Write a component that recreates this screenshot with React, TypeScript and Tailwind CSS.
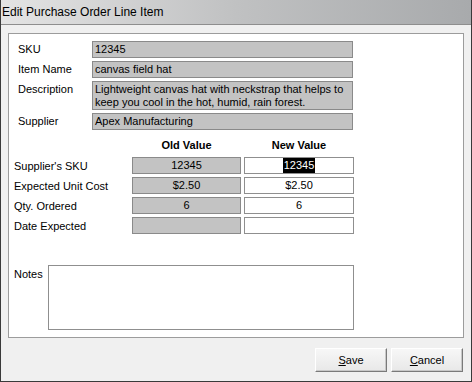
import React from "react";

const font = { fontFamily: '"Liberation Sans", Arial, sans-serif' };

function ReadField({ children, tall }: { children?: React.ReactNode; tall?: boolean }) {
  return (
    <div
      className={`w-[261px] border border-[#8a8a8a] bg-[#c3c3c3] px-[2px] text-[11px] text-black ${
        tall ? "h-[29px] leading-[13px] pt-[1px]" : "h-[17px] leading-[15px]"
      }`}
    >
      {children}
    </div>
  );
}

function InfoRow({ label, children, tall }: { label: string; children?: React.ReactNode; tall?: boolean }) {
  return (
    <div className="flex items-start">
      <div className="w-[74px] text-[11px] leading-[16px] text-black">{label}</div>
      <ReadField tall={tall}>{children}</ReadField>
    </div>
  );
}

function ValueRow({ label, oldVal, newVal, selected }: { label: string; oldVal: string; newVal: string; selected?: boolean }) {
  return (
    <div className="flex items-center">
      <div className="w-[118px] text-[11px] leading-[16px] text-black">{label}</div>
      <div className="flex h-[17px] w-[109px] items-center justify-center border border-[#8a8a8a] bg-[#c3c3c3] text-[11px] leading-[15px] text-black">
        {oldVal}
      </div>
      <div className="ml-[3px] flex h-[17px] w-[110px] items-center justify-center border border-[#8f8f8f] bg-white text-[11px] leading-[15px] text-black">
        {selected ? <span className="bg-black px-[1px] text-white">{newVal}</span> : newVal}
      </div>
    </div>
  );
}

function Button({ first, rest }: { first: string; rest: string }) {
  return (
    <button className="h-[24px] w-[72px] border border-t-white border-l-white border-r-[#7a7a7a] border-b-[#7a7a7a] bg-gradient-to-b from-[#f7f7f7] to-[#e8e8e8] text-[11px] text-black shadow-[inset_-1px_-1px_0_#c8c8c8]">
      <span className="underline">{first}</span>
      {rest}
    </button>
  );
}

export default function App() {
  return (
    <div style={font} className="flex h-[382px] w-[472px] flex-col border-x border-b border-[#3a3a3a] bg-[#f0f0f0]">
      <div className="h-[25px] border-b border-[#8e8e8e] bg-gradient-to-r from-[#e4e4e4] via-[#c0c1c2] to-[#a8aaac] pl-[1px] text-[12px] leading-[24px] text-black">
        Edit Purchase Order Line Item
      </div>

      <div className="ml-[7px] mt-[8px] h-[305px] w-[456px] border border-[#9c9c9c] bg-white">
        <div className="flex flex-col gap-[3px] pl-[9px] pt-[7px]">
          <InfoRow label="SKU">12345</InfoRow>
          <InfoRow label="Item Name">canvas field hat</InfoRow>
          <InfoRow label="Description" tall>
            Lightweight canvas hat with neckstrap that helps to keep you cool in the hot, humid, rain forest.
          </InfoRow>
          <InfoRow label="Supplier">Apex Manufacturing</InfoRow>
        </div>

        <div className="pl-[5px]">
          <div className="mt-[8px] flex h-[14px] text-[11px] font-bold leading-[14px] text-black">
            <div className="w-[118px]" />
            <div className="w-[109px] text-center">Old Value</div>
            <div className="ml-[3px] w-[110px] text-center">New Value</div>
          </div>
          <div className="mt-[5px] flex flex-col gap-[3px]">
            <ValueRow label="Supplier's SKU" oldVal="12345" newVal="12345" selected />
            <ValueRow label="Expected Unit Cost" oldVal="$2.50" newVal="$2.50" />
            <ValueRow label="Qty. Ordered" oldVal="6" newVal="6" />
            <ValueRow label="Date Expected" oldVal="" newVal="" />
          </div>

          <div className="mt-[31px] flex items-start">
            <div className="w-[34px] pt-[2px] text-[11px] leading-[14px] text-black">Notes</div>
            <div className="h-[65px] w-[306px] border border-[#8f8f8f] bg-white" />
          </div>
        </div>
      </div>

      <div className="mr-[8px] mt-[10px] flex justify-end gap-[4px]">
        <Button first="S" rest="ave" />
        <Button first="C" rest="ancel" />
      </div>
    </div>
  );
}
